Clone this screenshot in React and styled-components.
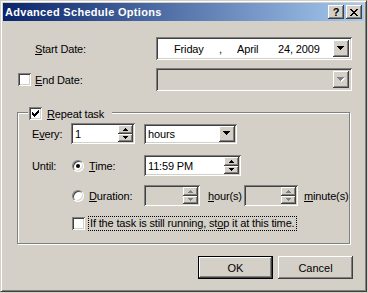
import styled, { createGlobalStyle } from 'styled-components';

const FACE = '#d4d0c8';
const SHADOW = '#808080';
const DARK = '#404040';

const GlobalStyle = createGlobalStyle`
  html, body {
    margin: 0;
    padding: 0;
    background: ${FACE};
  }
  body {
    font-family: 'Liberation Sans', Arial, sans-serif;
    font-size: 11px;
    letter-spacing: -0.15px;
    color: #000;
  }
  * { box-sizing: border-box; }
`;

// classic 3d edges
const raised = `
  background: ${FACE};
  box-shadow: inset -1px -1px ${DARK}, inset 1px 1px #fff, inset -2px -2px ${SHADOW}, inset 2px 2px ${FACE};
`;

const sunken = `
  box-shadow: inset 1px 1px ${SHADOW}, inset -1px -1px #fff, inset 2px 2px ${DARK}, inset -2px -2px ${FACE};
`;

const Window = styled.div`
  width: 367px;
  height: 292px;
  padding: 2px;
  background: ${FACE};
  border: 1px solid;
  border-color: ${FACE} ${DARK} ${DARK} ${FACE};
  box-shadow: inset 1px 1px #fff, inset -1px -1px ${SHADOW};
  display: flex;
  flex-direction: column;
`;

const TitleBar = styled.div`
  height: 18px;
  display: flex;
  align-items: center;
  padding: 0 2px 0 2px;
  background: linear-gradient(to right, #0a246a, #a6caf0);
`;

const Title = styled.div`
  flex: 1;
  color: #fff;
  font-weight: bold;
  font-size: 11px;
  letter-spacing: 0.3px;
  white-space: nowrap;
`;

const CaptionButton = styled.div`
  width: 16px;
  height: 14px;
  ${raised}
  display: flex;
  align-items: center;
  justify-content: center;
  font-weight: bold;
  font-size: 11px;
  line-height: 1;
  & + & { margin-left: 2px; }
`;

const Body = styled.div`
  padding: 16px 0 0 14px;
  display: flex;
  flex-direction: column;
  align-items: flex-start;
`;

const Row = styled.div`
  display: flex;
  align-items: center;
  height: ${p => p.$h || 23}px;
  margin-top: ${p => p.$mt || 0}px;
`;

const Label = styled.span`
  flex: none;
  width: ${p => (p.$w ? `${p.$w}px` : 'auto')};
  margin-left: ${p => p.$ml || 0}px;
  white-space: nowrap;
`;

const Key = styled.span`
  text-decoration: underline;
`;

const Field = styled.div`
  flex: none;
  width: ${p => p.$w}px;
  height: ${p => p.$h}px;
  margin-left: ${p => p.$ml || 0}px;
  padding: 2px;
  background: ${p => (p.$disabled ? FACE : '#fff')};
  ${sunken}
  display: flex;
  align-items: stretch;
`;

const FieldText = styled.span`
  flex: 1;
  display: flex;
  align-items: center;
  padding-left: ${p => p.$pl || 2}px;
  white-space: nowrap;
  overflow: hidden;
`;

const DatePart = styled.span`
  flex: none;
  width: ${p => p.$w}px;
`;

const DropButton = styled.div`
  flex: none;
  width: 16px;
  margin: ${p => p.$m || 0}px;
  ${raised}
  display: flex;
  align-items: center;
  justify-content: center;
`;

const SpinColumn = styled.div`
  flex: none;
  width: 15px;
  display: flex;
  flex-direction: column;
`;

const SpinButton = styled.div`
  flex: 1;
  ${raised}
  display: flex;
  align-items: center;
  justify-content: center;
`;

const Group = styled.div`
  position: relative;
  margin-top: 21px;
  width: 333px;
  height: 132px;
  border: 1px solid ${SHADOW};
  box-shadow: inset 1px 1px #fff, 1px 1px #fff;
  padding: 10px 0 0 14px;
  display: flex;
  flex-direction: column;
  align-items: flex-start;
`;

const Legend = styled.div`
  position: absolute;
  top: -6px;
  left: 10px;
  height: 13px;
  display: flex;
  align-items: center;
  gap: 5px;
  padding: 0 8px 0 1px;
  background: ${FACE};
`;

const CheckBox = styled.div`
  flex: none;
  width: 13px;
  height: 13px;
  margin-left: ${p => p.$ml || 0}px;
  margin-right: ${p => p.$mr || 0}px;
  background: #fff;
  ${sunken}
  display: flex;
  align-items: center;
  justify-content: center;
`;

const Radio = styled.div`
  flex: none;
  width: 12px;
  height: 12px;
  border-radius: 50%;
  background: #fff;
  border: 1px solid;
  border-color: ${SHADOW} #fff #fff ${SHADOW};
  box-shadow: inset 1px 1px ${DARK}, inset -1px -1px ${FACE};
  display: flex;
  align-items: center;
  justify-content: center;
  margin-right: 5px;

  &::after {
    content: '';
    width: 4px;
    height: 4px;
    border-radius: 50%;
    background: #000;
    display: ${p => (p.$checked ? 'block' : 'none')};
  }
`;

const FocusText = styled.span`
  margin-left: 3px;
  padding: 0 1px;
  border: 1px dotted #000;
  line-height: 13px;
  white-space: nowrap;
`;

const ButtonRow = styled.div`
  margin-top: 12px;
  width: 336px;
  display: flex;
  justify-content: flex-end;
  gap: 5px;
`;

const PushButton = styled.button`
  width: 75px;
  height: 23px;
  padding: 0;
  font: inherit;
  color: #000;
  ${raised}
  border: ${p => (p.$default ? '1px solid #000' : 'none')};
`;

const Arrow = ({ disabled }) => (
  <svg width="8" height="5" viewBox="0 0 8 5" shapeRendering="crispEdges">
    {disabled && <path transform="translate(1 1)" fill="#fff" d="M0 0h7v1H0z M1 1h5v1H1z M2 2h3v1H2z M3 3h1v1H3z" />}
    <path fill={disabled ? SHADOW : '#000'} d="M0 0h7v1H0z M1 1h5v1H1z M2 2h3v1H2z M3 3h1v1H3z" />
  </svg>
);

const SmallArrow = ({ up, disabled }) => (
  <svg width="5" height="3" viewBox="0 0 5 3" shapeRendering="crispEdges">
    <path
      fill={disabled ? SHADOW : '#000'}
      d={up ? 'M2 0h1v1H2z M1 1h3v1H1z M0 2h5v1H0z' : 'M0 0h5v1H0z M1 1h3v1H1z M2 2h1v1H2z'}
    />
  </svg>
);

const Check = () => (
  <svg width="7" height="7" viewBox="0 0 7 7" shapeRendering="crispEdges">
    <path d="M6 0h1v1H6z M5 1h2v1H5z M0 2h1v1H0z M4 2h3v1H4z M0 3h2v1H0z M3 3h3v1H3z M0 4h5v1H0z M1 5h3v1H1z M2 6h1v1H2z" />
  </svg>
);

const CloseGlyph = () => (
  <svg width="8" height="7" viewBox="0 0 8 7" shapeRendering="crispEdges">
    <path d="M0 0h2v1H0z M6 0h2v1H6z M1 1h2v1H1z M5 1h2v1H5z M2 2h4v1H2z M3 3h2v1H3z M2 4h4v1H2z M1 5h2v1H1z M5 5h2v1H5z M0 6h2v1H0z M6 6h2v1H6z" />
  </svg>
);

const Spin = ({ w, h = 21, ml, value, disabled }) => (
  <Field $w={w} $h={h} $ml={ml} $disabled={disabled}>
    <FieldText $pl={2}>{value}</FieldText>
    <SpinColumn>
      <SpinButton><SmallArrow up disabled={disabled} /></SpinButton>
      <SpinButton><SmallArrow disabled={disabled} /></SpinButton>
    </SpinColumn>
  </Field>
);

const App = () => (
  <>
    <GlobalStyle />
    <Window>
      <TitleBar>
        <Title>Advanced Schedule Options</Title>
        <CaptionButton>?</CaptionButton>
        <CaptionButton><CloseGlyph /></CaptionButton>
      </TitleBar>
      <Body>
        <Row>
          <Label $ml={18} $w={121}><Key>S</Key>tart Date:</Label>
          <Field $w={196} $h={23}>
            <FieldText $pl={16}>
              <DatePart $w={45}>Friday</DatePart>
              <DatePart $w={18}>,</DatePart>
              <DatePart $w={41}>April</DatePart>
              <span>24, 2009</span>
            </FieldText>
            <DropButton $m={1}><Arrow /></DropButton>
          </Field>
        </Row>
        <Row $mt={8}>
          <CheckBox $ml={1} $mr={4} />
          <Label $w={121}><Key>E</Key>nd Date:</Label>
          <Field $w={196} $h={23} $disabled>
            <FieldText />
            <DropButton $m={1}><Arrow disabled /></DropButton>
          </Field>
        </Row>
        <Group>
          <Legend>
            <CheckBox><Check /></CheckBox>
            <Label><Key>R</Key>epeat task</Label>
          </Legend>
          <Row $h={21}>
            <Label $w={39}>E<Key>v</Key>ery:</Label>
            <Spin w={64} value="1" />
            <Field $w={93} $h={20} $ml={9}>
              <FieldText $pl={2}>hours</FieldText>
              <DropButton><Arrow /></DropButton>
            </Field>
          </Row>
          <Row $h={21} $mt={11}>
            <Label $w={40}>Until:</Label>
            <Radio $checked />
            <Label $w={55}><Key>T</Key>ime:</Label>
            <Spin w={97} value="11:59 PM" />
          </Row>
          <Row $h={21} $mt={9}>
            <Label $w={40} />
            <Radio />
            <Label $w={55}><Key>D</Key>uration:</Label>
            <Spin w={56} disabled />
            <Label $ml={8} $w={36}><Key>h</Key>our(s)</Label>
            <Spin w={54} disabled />
            <Label $ml={6}><Key>m</Key>inute(s)</Label>
          </Row>
          <Row $h={16} $mt={9}>
            <Label $w={40} />
            <CheckBox />
            <FocusText>
              If the task is still running, st<Key>o</Key>p it at this time.
            </FocusText>
          </Row>
        </Group>
        <ButtonRow>
          <PushButton $default>OK</PushButton>
          <PushButton>Cancel</PushButton>
        </ButtonRow>
      </Body>
    </Window>
  </>
);

export default App;
